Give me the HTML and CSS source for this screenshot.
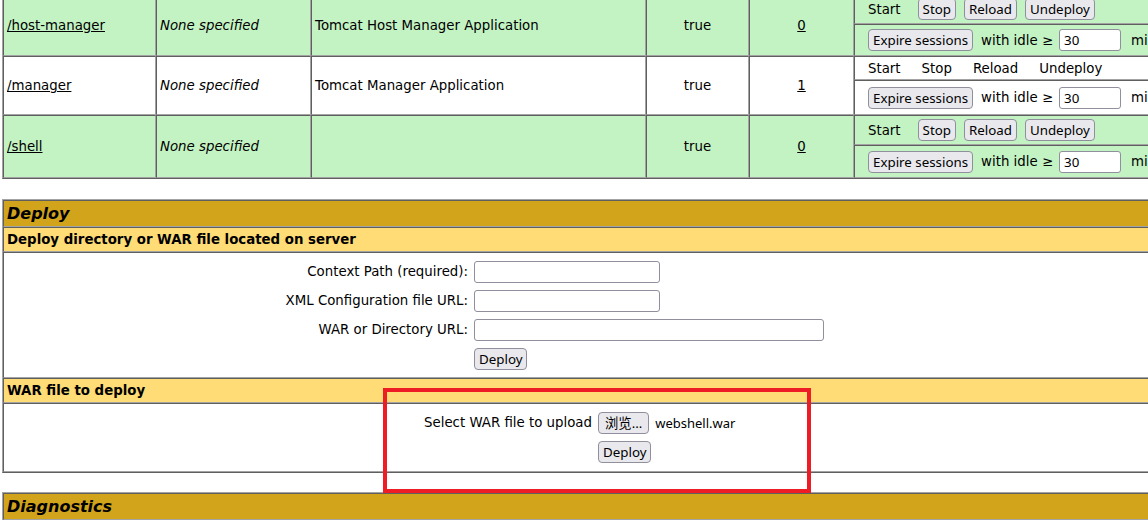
FILE: index.html
```html
<!DOCTYPE html>
<html lang="en">
<head>
<meta charset="utf-8">
<title>/manager</title>
<link rel="stylesheet" href="styles.css">
</head>
<body>
<div class="page">
  <table class="grid apps">
    <colgroup>
      <col class="c-path"><col class="c-ver"><col class="c-name"><col class="c-run"><col class="c-sess"><col class="c-cmd">
    </colgroup>
    <tbody>
      <tr class="green">
        <td rowspan="2"><a href="#">/host-manager</a></td>
        <td rowspan="2"><i>None specified</i></td>
        <td rowspan="2">Tomcat Host Manager Application</td>
        <td rowspan="2" class="center">true</td>
        <td rowspan="2" class="center"><a href="#">0</a></td>
        <td class="cmd"><div class="bar h22"><span class="word">Start</span><button class="btn">Stop</button><button class="btn">Reload</button><button class="btn">Undeploy</button></div></td>
      </tr>
      <tr class="green">
        <td class="cmd"><form class="bar expire h24"><button class="btn" type="button">Expire sessions</button><span class="lbl">with idle &ge;</span><input class="txt idle" type="text" value="30"><span class="lbl">minutes</span></form></td>
      </tr>
      <tr>
        <td rowspan="2"><a href="#">/manager</a></td>
        <td rowspan="2"><i>None specified</i></td>
        <td rowspan="2">Tomcat Manager Application</td>
        <td rowspan="2" class="center">true</td>
        <td rowspan="2" class="center"><a href="#">1</a></td>
        <td class="cmd"><div class="bar plain h16"><span>Start</span><span>Stop</span><span>Reload</span><span>Undeploy</span></div></td>
      </tr>
      <tr>
        <td class="cmd"><form class="bar expire h27"><button class="btn" type="button">Expire sessions</button><span class="lbl">with idle &ge;</span><input class="txt idle" type="text" value="30"><span class="lbl">minutes</span></form></td>
      </tr>
      <tr class="green">
        <td rowspan="2"><a href="#">/shell</a></td>
        <td rowspan="2"><i>None specified</i></td>
        <td rowspan="2"></td>
        <td rowspan="2" class="center">true</td>
        <td rowspan="2" class="center"><a href="#">0</a></td>
        <td class="cmd"><div class="bar h22"><span class="word">Start</span><button class="btn">Stop</button><button class="btn">Reload</button><button class="btn">Undeploy</button></div></td>
      </tr>
      <tr class="green">
        <td class="cmd"><form class="bar expire h25"><button class="btn" type="button">Expire sessions</button><span class="lbl">with idle &ge;</span><input class="txt idle" type="text" value="30"><span class="lbl">minutes</span></form></td>
      </tr>
    </tbody>
  </table>

  <table class="grid deploy">
    <tbody>
      <tr><td class="title">Deploy</td></tr>
      <tr><td class="header">Deploy directory or WAR file located on server</td></tr>
      <tr>
        <td class="formcell">
          <form class="form-grid fg-server">
            <label class="lbl-r" for="dp">Context Path (required):</label>
            <div class="ctl"><input id="dp" class="txt w186" type="text"></div>
            <label class="lbl-r" for="dc">XML Configuration file URL:</label>
            <div class="ctl"><input id="dc" class="txt w186" type="text"></div>
            <label class="lbl-r" for="dw">WAR or Directory URL:</label>
            <div class="ctl"><input id="dw" class="txt w350" type="text"></div>
            <span class="lbl-r"></span>
            <div class="ctl"><button class="btn" type="button">Deploy</button></div>
          </form>
        </td>
      </tr>
      <tr><td class="header">WAR file to deploy</td></tr>
      <tr>
        <td class="formcell">
          <form class="form-grid fg-upload">
            <span class="lbl-r">Select WAR file to upload</span>
            <div class="ctl"><button class="btn browse" type="button">浏览…</button><span class="fname">webshell.war</span></div>
            <span class="lbl-r"></span>
            <div class="ctl"><button class="btn" type="button">Deploy</button></div>
          </form>
        </td>
      </tr>
    </tbody>
  </table>

  <table class="grid diag">
    <tbody>
      <tr><td class="title">Diagnostics</td></tr>
      <tr><td class="header">Check to see if a web application has caused a memory leak on stop, reload or undeploy</td></tr>
    </tbody>
  </table>

  <div class="annot"></div>
</div>
</body>
</html>
```

FILE: styles.css
```css
html, body {
  margin: 0;
  padding: 0;
  overflow: hidden;
  background: #ffffff;
}

body {
  font-family: "DejaVu Sans", sans-serif;
  color: #000000;
}

.page {
  position: relative;
  display: flow-root;
  padding-left: 2px;
  width: 1240px;
}

table.grid {
  border-collapse: separate;
  border-spacing: 0;
  table-layout: fixed;
  width: 1230px;
  border: 1px solid;
  border-color: #a3a3a3 #5f5f5f #5f5f5f #a3a3a3;
}

.grid td {
  border: 1px solid;
  border-color: #5f5f5f #a3a3a3 #a3a3a3 #5f5f5f;
  padding: 3px;
  font-size: 13.333px;
  vertical-align: middle;
  text-align: left;
  white-space: nowrap;
  overflow: hidden;
}

.apps {
  margin-top: -7px;
}

.c-path { width: 153px; }
.c-ver { width: 155px; }
.c-name { width: 335px; }
.c-run { width: 103px; }
.c-sess { width: 105px; }

.green > td {
  background: #c3f3c3;
}

.grid td.center {
  text-align: center;
}

a {
  color: #000000;
  text-decoration: underline;
}

.bar {
  display: flex;
  align-items: center;
  padding-left: 10px;
  margin: 0;
}

.h16 { height: 16px; }
.h22 { height: 22px; }
.h24 { height: 24px; }
.h25 { height: 25px; }
.h27 { height: 27px; }

.bar .word {
  margin-right: 17px;
}

.bar .btn + .btn {
  margin-left: 8px;
}

.plain {
  gap: 21px;
}

.expire .btn {
  margin-right: 8px;
}

.expire .lbl {
  margin-right: 6px;
}

.expire .idle {
  margin-right: 10px;
}

.btn {
  box-sizing: border-box;
  height: 22px;
  margin: 0;
  padding: 0 4px;
  border: 1px solid #8f8f9d;
  border-radius: 4px;
  background: #e9e9ed;
  color: #000000;
  font-family: "Noto Sans", "Noto Sans CJK SC", sans-serif;
  font-size: 13.333px;
  line-height: 20px;
}

.btn.browse {
  padding: 0 6px;
}

.txt {
  box-sizing: border-box;
  height: 22px;
  margin: 0;
  padding: 0 4px;
  border: 1px solid #8f8f9d;
  border-radius: 3px;
  background: #ffffff;
  color: #000000;
  font-family: "Noto Sans", sans-serif;
  font-size: 13.333px;
}

.idle { width: 62px; }
.w186 { width: 186px; }
.w350 { width: 350px; }

.grid td.title {
  background: #d2a41c;
  font-size: 16px;
  font-weight: bold;
  font-style: italic;
  line-height: 19px;
}

.grid td.header {
  background: #ffdc75;
  font-weight: bold;
  line-height: 17px;
}

.deploy {
  margin-top: 20px;
}

.diag {
  margin-top: 19px;
}

.form-grid {
  display: grid;
  grid-auto-rows: 29px;
  margin: 0;
}

.fg-server {
  grid-template-columns: 464px 1fr;
  padding: 1px 0;
}

.fg-upload {
  grid-template-columns: 588px 1fr;
  padding: 1px 0 2px;
}

.lbl-r {
  align-self: center;
  text-align: right;
  padding-right: 3px;
}

.ctl {
  display: flex;
  align-items: center;
  padding-left: 3px;
}

.fname {
  margin-left: 6px;
  font-family: "Noto Sans", sans-serif;
  font-size: 13px;
}

.annot {
  position: absolute;
  left: 383px;
  top: 388px;
  width: 428px;
  height: 105px;
  box-sizing: border-box;
  border: 4px solid #ee1c25;
  pointer-events: none;
}
```
